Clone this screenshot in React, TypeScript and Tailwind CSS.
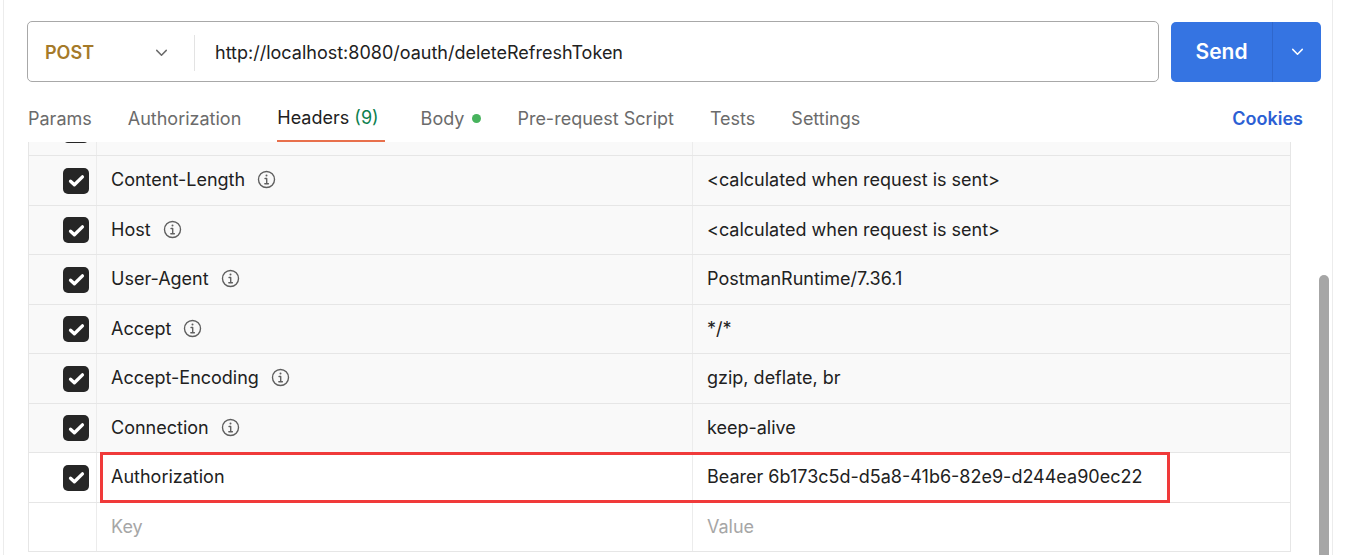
import React from 'react';

type Header = { key: string; value: string; info?: boolean };

const headers: Header[] = [
  { key: 'Content-Length', value: '<calculated when request is sent>', info: true },
  { key: 'Host', value: '<calculated when request is sent>', info: true },
  { key: 'User-Agent', value: 'PostmanRuntime/7.36.1', info: true },
  { key: 'Accept', value: '*/*', info: true },
  { key: 'Accept-Encoding', value: 'gzip, deflate, br', info: true },
  { key: 'Connection', value: 'keep-alive', info: true },
];

const tabs = ['Params', 'Authorization', 'Headers', 'Body', 'Pre-request Script', 'Tests', 'Settings'];

function Chevron({ className }: { className?: string }) {
  return (
    <svg viewBox="0 0 16 16" className={className} fill="none" stroke="currentColor" strokeWidth="1.4" strokeLinecap="round" strokeLinejoin="round">
      <path d="M3.5 6l4.5 4.5L12.5 6" />
    </svg>
  );
}

function Checkbox() {
  return (
    <div className="w-[26px] h-[26px] rounded-[5px] bg-[#262626] flex items-center justify-center">
      <svg viewBox="0 0 16 16" className="w-[19px] h-[19px]" fill="none" stroke="white" strokeWidth="2.8" strokeLinecap="round" strokeLinejoin="round">
        <path d="M3 8.6l3.2 3L13 4.9" />
      </svg>
    </div>
  );
}

function InfoIcon() {
  return (
    <svg viewBox="0 0 18 18" className="w-[19px] h-[19px] text-[#5f5f5f]" fill="none" stroke="currentColor">
      <circle cx="9" cy="9" r="7.6" strokeWidth="1.3" />
      <circle cx="9" cy="5.3" r="0.95" fill="currentColor" stroke="none" />
      <path d="M7.6 8h1.6v5M7.4 13h3.4" strokeWidth="1.3" strokeLinecap="round" strokeLinejoin="round" />
    </svg>
  );
}

function Row({ h, children, white }: { h: string; children: React.ReactNode; white?: boolean }) {
  return (
    <div className={`flex border-t border-[#e6e6e6] ${h} ${white ? 'bg-white' : 'bg-[#f9f9f9]'}`}>
      {children}
    </div>
  );
}

export default function App() {
  const heights = ['h-[50px]', 'h-[49px]', 'h-[50px]', 'h-[49px]', 'h-[50px]', 'h-[49px]'];

  return (
    <div className="w-[1345px] h-[555px] bg-white overflow-hidden relative font-['Inter',sans-serif] text-[18px] text-[#212121]">
      <div className="ml-[3px] w-[1330px] h-full border-l border-r border-[#ececec] pt-[21px] pl-[23px]">
        {/* request bar */}
        <div className="flex items-center">
          <div className="w-[1132px] h-[61px] border border-[#a8a8a8] rounded-[5px] flex items-center pt-[2px]">
            <div className="w-[166px] flex items-center pl-[17px] pr-[24px]">
              <span className="font-semibold text-[#a57a29]">POST</span>
              <Chevron className="ml-auto w-[17px] h-[17px] text-[#6b6b6b]" />
            </div>
            <div className="w-px h-[36px] bg-[#e3e3e3]" />
            <div className="pl-[20px] text-[#212121]">http://localhost:8080/oauth/deleteRefreshToken</div>
          </div>
          <div className="ml-[12px] w-[150px] h-[60px] rounded-[5px] bg-[#3574e2] flex text-white">
            <div className="w-[101px] flex items-center justify-center font-semibold text-[21px]">Send</div>
            <div className="w-px bg-[#2f67cc]" />
            <div className="flex-1 flex items-center justify-center">
              <Chevron className="w-[17px] h-[17px]" />
            </div>
          </div>
        </div>

        {/* tabs */}
        <div className="mt-[10px] h-[50px] w-[1276px] flex items-stretch gap-[36px] pl-[1px] text-[#6b6b6b]">
          {tabs.map((t) => (
            <div key={t} className={`flex items-center pt-[2px] ${t === 'Headers' ? 'border-b-2 border-[#e8704c] pr-[6px]' : ''}`}>
              {t === 'Headers' ? (
                <span className="text-[#212121]">
                  Headers <span className="text-[#0e7f4f]">(9)</span>
                </span>
              ) : t === 'Body' ? (
                <span className="flex items-center">
                  Body
                  <span className="ml-[8px] w-[9px] h-[9px] rounded-full bg-[#47b35d]" />
                </span>
              ) : (
                <span>{t}</span>
              )}
            </div>
          ))}
          <div className="ml-auto flex items-center pt-[2px] font-semibold text-[#2c5fd4]">Cookies</div>
        </div>

        {/* headers table */}
        <div className="relative w-[1263px] h-[413px] ml-[1px] overflow-hidden">
          <div className="border-l border-r border-b border-[#e6e6e6] mt-[-37px]">
            <div className="flex h-[50px] bg-[#f9f9f9]">
              <div className="w-[68px] border-r border-[#ececec] flex items-center justify-end pr-[7px]">
                <Checkbox />
              </div>
              <div className="w-[596px] border-r border-[#ececec]" />
              <div className="flex-1" />
            </div>
            {headers.map((hd, i) => (
              <Row key={hd.key} h={heights[i]}>
                <div className="w-[68px] border-r border-[#ececec] flex items-center justify-end pr-[7px]">
                  <Checkbox />
                </div>
                <div className="w-[596px] border-r border-[#ececec] flex items-center pl-[14px] pb-[2px] gap-[12px]">
                  <span>{hd.key}</span>
                  {hd.info && <InfoIcon />}
                </div>
                <div className="flex-1 flex items-center pl-[14px] pb-[2px]">{hd.value}</div>
              </Row>
            ))}
            <Row h="h-[50px]" white>
              <div className="w-[68px] border-r border-[#ececec] flex items-center justify-end pr-[7px]">
                <Checkbox />
              </div>
              <div className="w-[596px] border-r border-[#ececec] flex items-center pl-[14px] pb-[2px]">Authorization</div>
              <div className="flex-1 flex items-center pl-[14px] pb-[2px]">Bearer 6b173c5d-d5a8-41b6-82e9-d244ea90ec22</div>
            </Row>
            <Row h="h-[49px]" white>
              <div className="w-[68px] border-r border-[#ececec]" />
              <div className="w-[596px] border-r border-[#ececec] flex items-center pl-[14px] pb-[2px] text-[#a6a6a6]">Key</div>
              <div className="flex-1 flex items-center pl-[14px] pb-[2px] text-[#a6a6a6]">Value</div>
            </Row>
          </div>

          {/* highlight annotation */}
          <div className="absolute left-[72px] top-[310px] w-[1070px] h-[51px] border-[3px] border-[#f03a3a]" />
        </div>
      </div>

      {/* scrollbar */}
      <div className="absolute left-[1319px] top-[275px] w-[10px] h-[290px] rounded-t-full bg-[#a6a6a6]" />
    </div>
  );
}
